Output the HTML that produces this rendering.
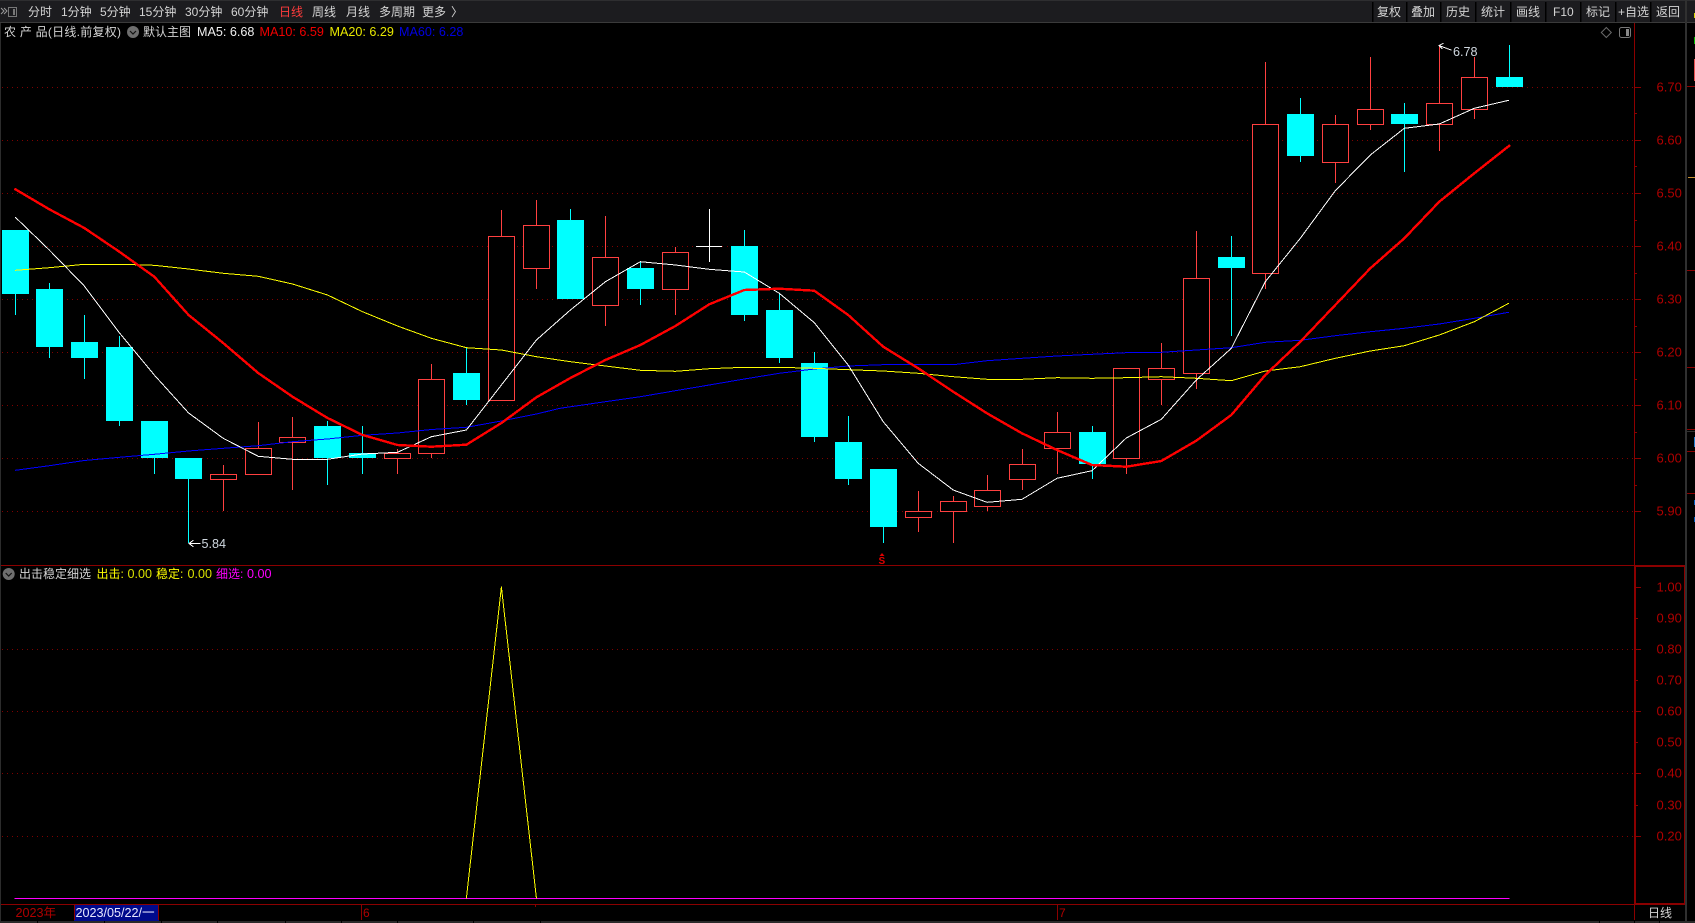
<!DOCTYPE html>
<html><head><meta charset="utf-8"><title>农产品</title>
<style>
html,body{margin:0;padding:0;background:#000;width:1695px;height:923px;overflow:hidden}
svg{display:block;position:absolute;left:0;top:0}
text{font-family:"Liberation Sans","Noto Sans CJK SC",sans-serif;font-size:12px;white-space:pre}
.t{fill:#d4d4d4}
.a{fill:#b00000;font-size:13px}
.m{font-size:12.6px}
</style></head><body>
<svg width="1695" height="923" viewBox="0 0 1695 923" xmlns="http://www.w3.org/2000/svg">
<rect width="1695" height="923" fill="#000"/>
<!-- toolbar -->
<rect width="1695" height="22" fill="#1c1c1f"/>
<rect y="0" width="1695" height="1" fill="#2e2e30"/>
<rect y="22" width="1695" height="1" fill="#3a3a3a"/>
<g shape-rendering="crispEdges">
<path d="M1372.5 2V22M1406.5 2V22M1440.5 2V22M1475.5 2V22M1510.5 2V22M1545.5 2V22M1580.5 2V22M1615.5 2V22M1650.5 2V22" stroke="#000" stroke-width="1.5" fill="none"/>
<!-- frame -->
<rect x="0" y="23" width="1" height="900" fill="#2c2c2c"/>
<rect x="1685" y="0" width="2" height="923" fill="#303030"/>
<!-- grid upper -->
<path d="M2 87.5H1634M2 140.5H1634M2 193.5H1634M2 246.5H1634M2 299.5H1634M2 352.5H1634M2 405.5H1634M2 458.5H1634M2 511.5H1634" stroke="#800000" stroke-dasharray="1 4" fill="none"/>
<!-- grid lower -->
<path d="M2 649.5H1634M2 711.5H1634M2 773.5H1634M2 836.5H1634" stroke="#800000" stroke-dasharray="1 4" fill="none"/>
<!-- axes -->
<path d="M1634.5 23V566" stroke="#8b0000" fill="none"/>
<path d="M1635 87.5h6M1635 140.5h6M1635 193.5h6M1635 246.5h6M1635 299.5h6M1635 352.5h6M1635 405.5h6M1635 458.5h6M1635 511.5h6M1635 113.5h2M1635 166.5h2M1635 220.5h2M1635 273.5h2M1635 326.5h2M1635 379.5h2M1635 432.5h2M1635 485.5h2" stroke="#8b0000" fill="none"/>
<rect x="1" y="565" width="1634" height="1" fill="#8b0000"/>
<rect x="1635" y="565" width="50" height="2" fill="#8b0000"/>
<rect x="1634" y="566" width="2" height="338" fill="#8b0000"/>
<rect x="1684" y="566" width="1" height="338" fill="#8b0000"/>
<path d="M1636 587.5h5M1636 649.5h5M1636 711.5h5M1636 773.5h5M1636 836.5h5M1636 618.5h2M1636 680.5h2M1636 742.5h2M1636 805.5h2" stroke="#8b0000" fill="none"/>
<rect x="1" y="904" width="1634" height="1" fill="#8b0000"/>
<rect x="1635" y="903" width="50" height="2" fill="#8b0000"/>
<rect x="1634" y="905" width="1" height="15" fill="#8b0000"/>
<path d="M535.5 904v3" stroke="#8b0000" fill="none"/>
<!-- side marks -->
<path d="M1687 86.5h8M1687 270.5h8M1687 367.5h8M1687 429.5h8M1687 451.5h8M1687 493.5h8" stroke="#8b0000" fill="none"/>
<path d="M1688 177.5h7" stroke="#c89030" fill="none"/>
<rect x="1687" y="431" width="8" height="1" fill="#303030"/>
<rect x="1694" y="13" width="1" height="5" fill="#d8d800"/>
<rect x="1694" y="37" width="1" height="7" fill="#00c000"/>
<rect x="1694" y="59" width="1" height="22" fill="#e85050"/>
<rect x="1694" y="437" width="1" height="10" fill="#2080d0"/>
<rect x="1694" y="500" width="1" height="5" fill="#0060c0"/>
<rect x="1694" y="517" width="1" height="5" fill="#0060c0"/>
<!-- bottom strip -->
<rect x="0" y="921" width="1695" height="2" fill="#2a2a2a"/>
<path d="M37.5 921v2M104.5 921v2M161.5 921v2M217.5 921v2M285.5 921v2M341.5 921v2M397.5 921v2M473.5 921v2M540.5 921v2M1599.5 921v2M1634.5 921v2M1659.5 921v2" stroke="#000" fill="none"/>
<!-- date box -->
<rect x="74" y="905" width="85" height="16" fill="#000a8c"/>
<path d="M74.5 905v15M158.5 905v15M361.5 905v15M1057.5 905v15" stroke="#8b0000" fill="none"/>

<!-- cyan wicks -->
<path stroke="#0ff" fill="none" d="M15.5 294V315M49.5 283V358M84.5 315V379M119.5 336V426M154.5 458V474M188.5 479V543M327.5 421V485M362.5 426V474M466.5 348V405M570.5 209V220M640.5 262V305M744.5 230V321M779.5 294V363M814.5 352V442M848.5 416V485M883.5 527V543M1092.5 426V479M1231.5 236V336M1300.5 98V162M1404.5 103V172M1509.5 45V77"/>
<!-- cyan bodies -->
<path fill="#0ff" d="M2 230h27v64h-27zM36 289h27v58h-27zM71 342h27v16h-27zM106 347h27v74h-27zM141 421h27v37h-27zM175 458h27v21h-27zM314 426h27v32h-27zM349 453h27v5h-27zM453 373h27v27h-27zM557 220h27v79h-27zM627 268h27v21h-27zM731 246h27v69h-27zM766 310h27v48h-27zM801 363h27v74h-27zM835 442h27v37h-27zM870 469h27v58h-27zM1079 432h27v32h-27zM1218 257h27v11h-27zM1287 114h27v42h-27zM1391 114h27v10h-27zM1496 77h27v10h-27z"/>
<!-- red wicks -->
<path stroke="#ff4040" fill="none" d="M223.5 465V511M258.5 422V448M292.5 417V490M397.5 449V474M431.5 364V458M501.5 210V236M536.5 200V289M605.5 216V326M675.5 247V315M918.5 491V532M953.5 496V543M987.5 475V511M1022.5 449V490M1057.5 412V474M1126.5 458V474M1161.5 343V405M1196.5 231V389M1265.5 62V289M1335.5 115V183M1370.5 57V130M1439.5 45V151M1474.5 57V119"/>
<!-- red bodies -->
<path stroke="#ff4040" fill="#000" d="M210.5 474.5h26v5h-26zM245.5 448.5h26v26h-26zM279.5 437.5h26v5h-26zM384.5 453.5h26v5h-26zM418.5 379.5h26v74h-26zM488.5 236.5h26v164h-26zM523.5 225.5h26v43h-26zM592.5 257.5h26v48h-26zM662.5 252.5h26v37h-26zM905.5 511.5h26v6h-26zM940.5 501.5h26v10h-26zM974.5 490.5h26v16h-26zM1009.5 464.5h26v15h-26zM1044.5 432.5h26v16h-26zM1113.5 368.5h26v90h-26zM1148.5 368.5h26v11h-26zM1183.5 278.5h26v95h-26zM1252.5 124.5h26v149h-26zM1322.5 124.5h26v38h-26zM1357.5 109.5h26v15h-26zM1426.5 103.5h26v21h-26zM1461.5 77.5h26v32h-26z"/>
<!-- doji -->
<path stroke="#fff" fill="none" d="M709.5 209V262M696 246.5H722"/>
</g>

<!-- MA lines -->
<g fill="none" stroke-linejoin="round" stroke-linecap="round" shape-rendering="crispEdges">
<polyline stroke="#0000ff" stroke-width="1" points="15.4,470.3 49.3,465.7 84.3,460.5 119.3,457.3 154.3,454.3 188.6,451 223.2,448.3 258.2,445.7 292.5,441.7 327.5,439 362.5,435.3 397.5,433 431.4,429.5 466.4,427.3 501.4,421 536.4,414 560,408.3 605.4,401.7 640.4,396.7 675.4,390.7 709.3,385 744.3,379 779.3,373.3 814.3,369 848.2,366 883.2,364.7 918.2,364.7 953.2,364.7 987,360.7 1022,358.3 1057,356 1092,354.3 1126.3,352.7 1161.3,352.3 1196.3,350 1231.3,347.7 1265.3,342.3 1300.3,340.3 1335.3,335.7 1370.3,331.7 1404.3,328.3 1439.3,324 1474.3,318.3 1508.7,312.3"/>
<polyline stroke="#ffff00" stroke-width="1" points="15.4,270.3 49.3,267.7 84.3,264.3 119.3,264.3 154.3,265.3 188.6,269 223.2,273.3 258.2,276.3 292.5,284 327.5,295 362.5,311.7 397.5,326 431.4,338.3 466.4,347.7 501.4,350 536.4,356.7 570.4,361.7 605.4,366 640.4,370.3 675.4,371.3 709.3,368.7 744.3,367.3 779.3,367.3 814.3,368.3 848.2,369.7 883.2,371 918.2,373.3 953.2,376.7 987,379.3 1022,379.3 1057,377.7 1092,378.3 1126.3,377.7 1161.3,376.7 1196.3,378.3 1231.3,380.7 1265.3,371 1300.3,366.7 1335.3,358.3 1370.3,351 1404.3,345.7 1439.3,335 1474.3,321.7 1508.7,303.3"/>
<polyline stroke="#ffffff" stroke-width="1" points="15.4,217.3 49.3,250 84.3,286 119.3,332.7 154.3,375 188.6,413 223.2,438.3 258.2,456.3 292.5,459.3 327.5,459.3 362.5,454 397.5,452.3 431.4,436.7 466.4,430 501.4,385 536.4,340 570.4,310 605.4,281.7 640.4,261.7 675.4,265 709.3,269.3 744.3,272 779.3,293.3 814.3,322.7 848.2,365 883.2,421.7 918.2,463.3 953.2,490 987,502.3 1022,499.3 1057,478.3 1092,470.7 1126.3,438 1161.3,419.3 1196.3,380 1231.3,348.3 1265.3,281.7 1300.3,238.3 1335.3,190.7 1370.3,155 1404.3,128.3 1439.3,124 1474.3,108.3 1508.7,100.3"/>
<polyline stroke="#ff0000" stroke-width="2.4" points="15.4,189.3 49.3,209.3 84.3,228 119.3,251.7 154.3,276.7 188.6,315 223.2,343 258.2,373 292.5,396.7 327.5,418 362.5,435 397.5,445 431.4,446.7 466.4,444.7 501.4,423 536.4,397.3 570.4,378 605.4,360 640.4,345 675.4,326 709.3,304.3 744.3,290 779.3,288.7 814.3,290.7 848.2,315 883.2,346.7 918.2,368.3 953.2,391.7 987,413.3 1022,433.3 1057,450 1092,465 1126.3,466.7 1161.3,461 1196.3,440.7 1231.3,415 1265.3,375 1300.3,341.7 1335.3,305 1370.3,268.3 1404.3,238.3 1439.3,201.7 1474.3,173.3 1509.3,145.7"/>
<!-- lower indicator -->
<path stroke="#ff00ff" stroke-width="1" d="M15 898.5H1509"/>
<polyline stroke="#ffff00" stroke-width="1" points="466.4,898 501.4,587 536.4,898"/>
<!-- high low arrows -->
<path stroke="#fff" stroke-width="1" d="M189 543.5H200M189 543.5l4-3M189 543.5l4 3M1439 45.5L1451 50M1439 45.5l4-2M1439 45.5l3 3"/>
</g>

<!-- toolbar icon -->
<g fill="none" stroke="#9a9a9a">
<path d="M1 8l3 3-3 3M4 8l3 3-3 3" stroke-width="1"/>
<rect x="8.5" y="7.5" width="8" height="9" stroke="#777"/>
<rect x="13" y="9" width="2" height="6" fill="#777" stroke="none"/>
</g>
<!-- toolbar labels -->
<g class="t">
<text x="28" y="16" class="t">分时</text>
<text x="61" y="16" class="t">1分钟</text>
<text x="100" y="16" class="t">5分钟</text>
<text x="139" y="16" class="t">15分钟</text>
<text x="185" y="16" class="t">30分钟</text>
<text x="231" y="16" class="t">60分钟</text>
<text x="279" y="16" style="fill:#ff3c3c">日线</text>
<text x="312" y="16" class="t">周线</text>
<text x="346" y="16" class="t">月线</text>
<text x="379" y="16" class="t">多周期</text>
<text x="422" y="16" class="t">更多</text>
<text x="451" y="16" class="t">〉</text>
<text x="1377" y="16" class="t">复权</text>
<text x="1411" y="16" class="t">叠加</text>
<text x="1446" y="16" class="t">历史</text>
<text x="1481" y="16" class="t">统计</text>
<text x="1516" y="16" class="t">画线</text>
<text x="1553" y="16" class="t">F10</text>
<text x="1586" y="16" class="t">标记</text>
<text x="1618" y="16" class="t">+自选</text>
<text x="1656" y="16" class="t">返回</text>
</g>
<!-- info row upper -->
<text x="4" y="36" class="t" textLength="117" lengthAdjust="spacing">农 产 品(日线.前复权)</text>
<circle cx="133" cy="32" r="6" fill="#6e6e6e"/>
<path d="M130 31l3 3 3-3" fill="none" stroke="#111" stroke-width="1.2"/>
<text x="143" y="36" class="t">默认主图</text>
<text x="197" y="36" fill="#f0f0f0" class="m">MA5: 6.68</text>
<text x="259.5" y="36" fill="#f00000" class="m">MA10: 6.59</text>
<text x="329.5" y="36" fill="#e8e800" class="m">MA20: 6.29</text>
<text x="399" y="36" fill="#0000e0" class="m">MA60: 6.28</text>
<!-- top-right icons -->
<path d="M1606.3 27.5l5 5-5 5-5-5z" fill="none" stroke="#6a6a6a"/>
<rect x="1619.5" y="27.5" width="11" height="10" rx="2" fill="none" stroke="#777"/>
<rect x="1626" y="29" width="3" height="7" fill="#888"/>
<!-- info row lower -->
<circle cx="8.7" cy="574" r="6" fill="#6e6e6e"/>
<path d="M5.7 573l3 3 3-3" fill="none" stroke="#111" stroke-width="1.2"/>
<text x="19" y="578" class="t">出击稳定细选</text>
<text x="96.5" y="578" fill="#ffff00">出击: </text>
<text x="127.5" y="578" fill="#d8e000" class="m">0.00</text>
<text x="156" y="578" fill="#ffff00">稳定: </text>
<text x="187.5" y="578" fill="#d8e000" class="m">0.00</text>
<text x="216" y="578" fill="#ff00ff">细选: </text>
<text x="247" y="578" fill="#ff00ff" class="m">0.00</text>
<!-- price labels -->
<g class="a">
<text class="a" x="1656.5" y="91.5">6.70</text>
<text class="a" x="1656.5" y="144.5">6.60</text>
<text class="a" x="1656.5" y="197.5">6.50</text>
<text class="a" x="1656.5" y="250.5">6.40</text>
<text class="a" x="1656.5" y="303.5">6.30</text>
<text class="a" x="1656.5" y="356.5">6.20</text>
<text class="a" x="1656.5" y="409.5">6.10</text>
<text class="a" x="1656.5" y="462.5">6.00</text>
<text class="a" x="1656.5" y="515.5">5.90</text>
<text class="a" x="1656.5" y="591.5">1.00</text>
<text class="a" x="1656.5" y="622.5">0.90</text>
<text class="a" x="1656.5" y="653.5">0.80</text>
<text class="a" x="1656.5" y="684.5">0.70</text>
<text class="a" x="1656.5" y="715.5">0.60</text>
<text class="a" x="1656.5" y="746.5">0.50</text>
<text class="a" x="1656.5" y="777.5">0.40</text>
<text class="a" x="1656.5" y="809.5">0.30</text>
<text class="a" x="1656.5" y="840.5">0.20</text>
</g>
<!-- high/low labels -->
<text x="201.5" y="548" fill="#d0d8e0" class="m">5.84</text>
<text x="1453" y="56" fill="#d0d8e0" class="m">6.78</text>
<path d="M882 553l-2.5 3h5z" fill="#e00000"/>
<text x="878.5" y="564" fill="#e00000" style="font-size:10px;font-weight:bold">S</text>
<!-- bottom labels -->
<text x="15.5" y="917" fill="#b00000" class="m">2023年</text>
<text x="75.5" y="917" fill="#e8e8ff" class="m">2023/05/22/一</text>
<text x="363" y="917" fill="#b00000">6</text>
<text x="1059" y="917" fill="#b00000">7</text>
<text x="1648" y="917" class="t">日线</text>
</svg>
</body></html>
